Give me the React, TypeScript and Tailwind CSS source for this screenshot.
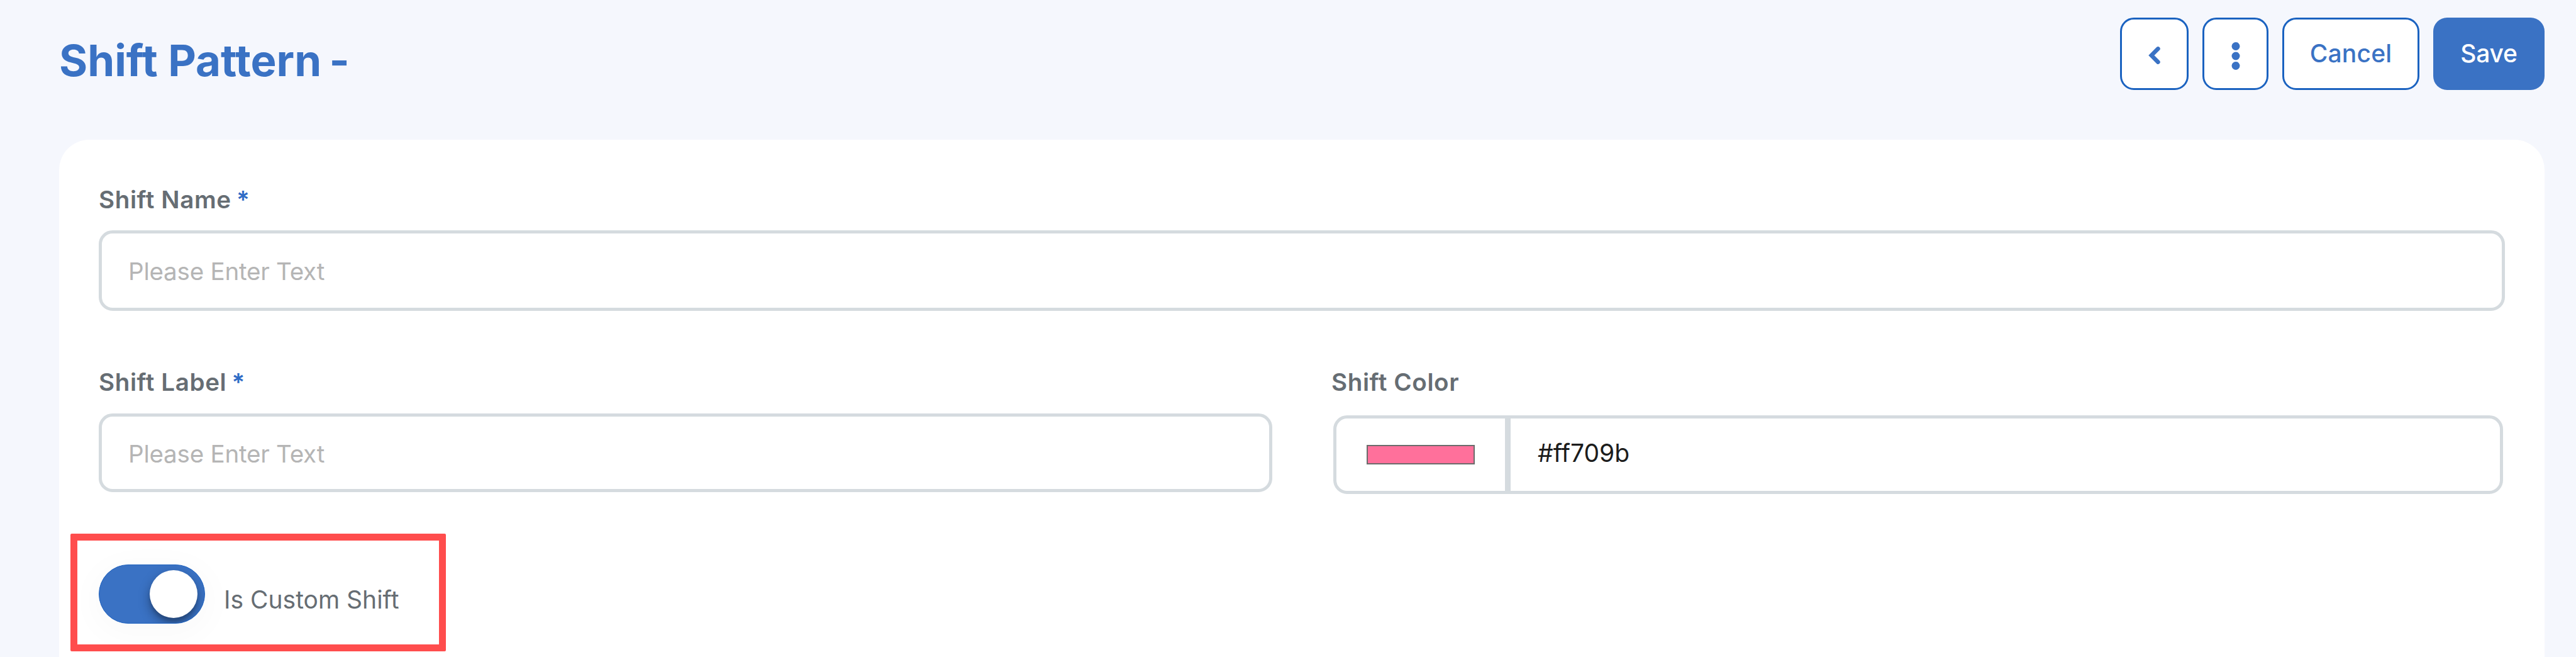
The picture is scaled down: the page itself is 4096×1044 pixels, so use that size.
import { useState } from "react";
import clsx from "clsx";

interface FieldLabelProps {
  text: string;
  required?: boolean;
}

const FieldLabel = ({ text, required }: FieldLabelProps) => (
  <label className="block whitespace-pre text-[38.6px] leading-[46px] font-[570] tracking-[0.6px] text-[#666d73]">
    {text}
    {required && <span className="-ml-[2px] text-[#2f6cc6]"> *</span>}
  </label>
);

interface TextInputProps {
  value: string;
  onChange: (value: string) => void;
  className?: string;
}

const TextInput = ({ value, onChange, className }: TextInputProps) => (
  <input
    type="text"
    value={value}
    onChange={(e) => onChange(e.target.value)}
    placeholder="Please Enter Text"
    className={clsx(
      "block w-full rounded-[22px] border-5 border-[#d5dbdf] bg-white pt-[2px] pl-[42px] text-[38.6px] tracking-[-0.25px] text-[#1c1c1c] outline-none placeholder:text-[#b5b5b5]",
      className
    )}
  />
);

const outlineButton =
  "flex h-[115px] items-center justify-center rounded-[22px] border-3 border-[#1a62c0] bg-white text-[#3a72c4]";

const Header = () => (
  <header className="flex h-[222px] items-start justify-between pt-[28px] pr-[50px] pl-[94px]">
    <h1 className="mt-[28px] text-[69px] leading-[80px] font-[650] whitespace-nowrap text-[#3a72c4]">
      Shift Pattern<span className="-ml-[4px]"> -</span>
    </h1>
    <div className="flex gap-[22px]">
      <button className={clsx(outlineButton, "w-[109px]")} aria-label="Back">
        <svg className="mt-[5px] h-[30px] w-[20px]" viewBox="0 0 20 30" fill="none">
          <path d="M15.4 4.4L4.9 15L15.4 25.6" stroke="currentColor" strokeWidth="6.6" strokeLinecap="round" />
        </svg>
      </button>
      <button className={clsx(outlineButton, "w-[105px]")} aria-label="More">
        <svg className="mt-[6px] h-[46px] w-[14px]" viewBox="0 0 14 46" fill="currentColor">
          <circle cx="7" cy="7.5" r="6.5" />
          <circle cx="7" cy="23" r="6.5" />
          <circle cx="7" cy="38.5" r="6.5" />
        </svg>
      </button>
      <button className={clsx(outlineButton, "w-[218px] pb-[1px] text-[39px] font-medium tracking-[0.2px]")}>
        Cancel
      </button>
      <button className="h-[115px] w-[177px] rounded-[22px] bg-[#3a72c4] pb-[1px] text-[39px] font-medium tracking-[-0.2px] text-white">
        Save
      </button>
    </div>
  </header>
);

interface ToggleProps {
  checked: boolean;
  onChange: (checked: boolean) => void;
}

const Toggle = ({ checked, onChange }: ToggleProps) => (
  <button
    role="switch"
    aria-checked={checked}
    onClick={() => onChange(!checked)}
    className="rounded-full shadow-[0_10px_50px_10px_rgba(0,0,0,0.025)]"
  >
    <span
      className={clsx(
        "flex h-[94px] w-[169px] items-center overflow-hidden rounded-full border border-[#1f62bf] px-[11px]",
        checked ? "justify-end bg-[#3a72c4]" : "justify-start bg-[#d5dbdf]"
      )}
    >
      <span className="size-[76px] rounded-full bg-white shadow-[0_8px_18px_rgba(0,0,0,0.35),0_6px_4px_rgba(0,0,0,0.12)]" />
    </span>
  </button>
);

export default function App() {
  const [name, setName] = useState("");
  const [label, setLabel] = useState("");
  const [color, setColor] = useState("#ff709b");
  const [isCustom, setIsCustom] = useState(true);

  return (
    <div className="h-[1044px] w-[4096px] overflow-hidden bg-[#f5f7fd] font-['Inter',sans-serif]">
      <Header />

      <main className="mr-[50px] ml-[94px] h-[860px] rounded-t-[48px] bg-white pt-[72px] pr-[63px] pl-[63px]">
        <FieldLabel text="Shift Name" required />
        <TextInput value={name} onChange={setName} className="mt-[26px] h-[128px]" />

        <div className="mt-[90px] flex justify-between">
          <div className="w-[1866px]">
            <FieldLabel text="Shift Label" required />
            <TextInput value={label} onChange={setLabel} className="mt-[27px] h-[125px]" />
          </div>
          <div className="w-[1866px]">
            <FieldLabel text="Shift Color" />
            <div className="mt-[30px] mr-[3px] ml-[3px] flex h-[125px] rounded-[22px] border-5 border-[#d5dbdf]">
              <div className="flex w-[277px] shrink-0 items-center justify-center border-r-9 border-[#d5dbdf]">
                <div className="h-[31px] w-[172px] border-2 border-[#6b6b6b]" style={{ backgroundColor: color }} />
              </div>
              <input
                type="text"
                value={color}
                onChange={(e) => setColor(e.target.value)}
                className="min-w-0 flex-1 bg-transparent pb-[4px] pl-[43px] text-[39px] text-[#1c1c1c] outline-none"
              />
            </div>
          </div>
        </div>

        <div className="relative mt-[112px] flex w-fit items-center gap-[30px]">
          <Toggle checked={isCustom} onChange={setIsCustom} />
          <span className="mt-[18px] text-[39px] leading-[46px] whitespace-nowrap text-[#666d73]">Is Custom Shift</span>
          {/* highlight frame around the toggle */}
          <div className="pointer-events-none absolute -top-[49px] -left-[45px] h-[187px] w-[597px] rounded-[2px] border-11 border-[#ff4d4d]" />
        </div>
      </main>
    </div>
  );
}
